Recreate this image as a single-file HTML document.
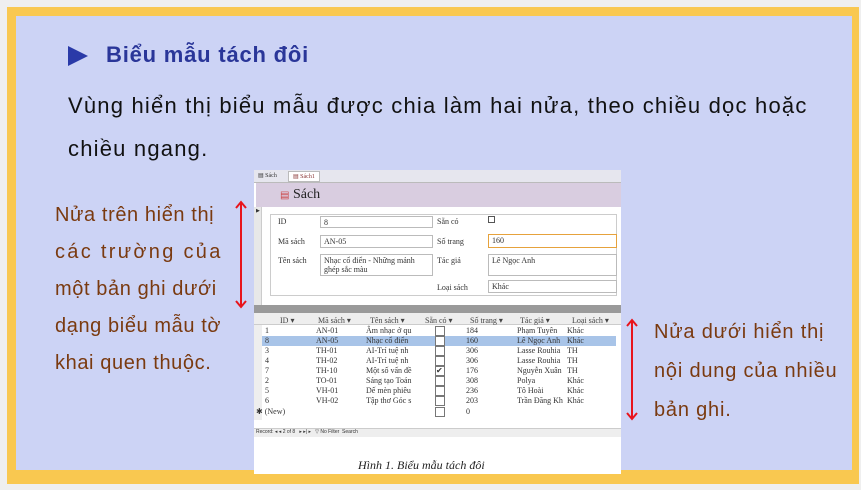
<!DOCTYPE html>
<html><head><meta charset="utf-8"><style>
*{margin:0;padding:0;box-sizing:border-box}
body{width:861px;height:490px;background:#efefef;position:relative;overflow:hidden;font-family:"Liberation Sans",sans-serif}
.frame{position:absolute;left:7px;top:7px;width:852px;height:477px;background:#f9c850}
.inner{position:absolute;left:16px;top:16px;width:836px;height:454px;background:#ccd3f5}
.a{position:absolute;white-space:nowrap}
.title{left:106px;top:42px;font-size:22px;font-weight:bold;color:#2a3699;letter-spacing:0.8px}
.p{left:68px;font-size:22px;color:#111;letter-spacing:1.2px}
.side{color:#7a3a10;font-size:20px}
.img{position:absolute;left:254px;top:170px;width:367px;height:304px;background:#fff;font-family:"Liberation Serif",serif;color:#333}
.s{position:absolute;font-size:8px;white-space:nowrap}
.box{position:absolute;border:1px solid #bbb;background:#fff;font-size:8px;padding:1px 3px}
.row{position:absolute;left:8px;width:354px;height:10px;font-size:8px}
.row span{position:absolute;top:0}
.cb{position:absolute;left:180px;width:10px;height:10px;border:1px solid #777;background:#fff}
</style></head><body>
<div class="frame"></div><div class="inner"></div>
<svg class="a" style="left:68px;top:46px" width="22" height="22"><polygon points="0,0 20,10 0,20" fill="#2a3aa8"/></svg>
<div class="a title">Biểu mẫu tách đôi</div>
<div class="a p" style="top:93px">Vùng hiển thị biểu mẫu được chia làm hai nửa, theo chiều dọc hoặc</div>
<div class="a p" style="top:136px">chiều ngang.</div>
<div class="a side" style="left:55px;top:197px;line-height:37px;letter-spacing:0.6px">Nửa trên hiển thị<br><span style="letter-spacing:2.3px">các trường của</span><br>một bản ghi dưới<br>dạng biểu mẫu tờ<br>khai quen thuộc.</div>
<div class="a side" style="left:654px;top:313px;line-height:39px;letter-spacing:0.8px">Nửa dưới hiển thị<br>nội dung của nhiều<br>bản ghi.</div>
<svg class="a" style="left:234px;top:200px" width="14" height="110"><line x1="7" y1="2" x2="7" y2="107" stroke="#e8141c" stroke-width="2"/><polyline points="2,8 7,2 12,8" fill="none" stroke="#e8141c" stroke-width="2"/><polyline points="2,101 7,107 12,101" fill="none" stroke="#e8141c" stroke-width="2"/></svg>
<svg class="a" style="left:625px;top:318px" width="14" height="104"><line x1="7" y1="2" x2="7" y2="101" stroke="#e8141c" stroke-width="2"/><polyline points="2,8 7,2 12,8" fill="none" stroke="#e8141c" stroke-width="2"/><polyline points="2,95 7,101 12,95" fill="none" stroke="#e8141c" stroke-width="2"/></svg>
<div class="img">
 <div style="position:absolute;left:0;top:0;width:367px;height:13px;background:#e6e6ee;border-bottom:1px solid #bbb"></div>
 <div class="s" style="left:4px;top:2px;font-size:6px">▤ Sách</div>
 <div class="s" style="left:34px;top:1px;font-size:6px;background:#fff;padding:1px 4px;border:1px solid #bbb;color:#833">▤ Sách1</div>
 <div style="position:absolute;left:2px;top:13px;width:365px;height:24px;background:#d9cde0"></div>
 <div class="s" style="left:26px;top:17px;font-size:14px;color:#222"><span style="color:#c44;font-size:10px">▤</span> Sách</div>
 <div style="position:absolute;left:0;top:37px;width:8px;height:98px;background:#e8e8e8;border-right:1px solid #ccc"></div>
 <div class="s" style="left:2px;top:38px;font-size:5px">▶</div>
 <div style="position:absolute;left:16px;top:44px;width:347px;height:82px;border:1px solid #ccc"></div>
 <div class="s" style="left:24px;top:47px">ID</div><div class="box" style="left:66px;top:46px;width:113px;height:12px">8</div>
 <div class="s" style="left:24px;top:67px">Mã sách</div><div class="box" style="left:66px;top:65px;width:113px;height:13px">AN-05</div>
 <div class="s" style="left:24px;top:86px">Tên sách</div><div class="box" style="left:66px;top:84px;width:113px;height:22px;line-height:9px">Nhạc cổ điển - Những mảnh ghép sắc màu</div>
 <div class="s" style="left:183px;top:47px">Sẵn có</div><div style="position:absolute;left:234px;top:46px;width:7px;height:7px;border:1px solid #555"></div>
 <div class="s" style="left:183px;top:67px">Số trang</div><div class="box" style="left:234px;top:64px;width:129px;height:14px;border:1px solid #e6a23c">160</div>
 <div class="s" style="left:183px;top:86px">Tác giả</div><div class="box" style="left:234px;top:84px;width:129px;height:22px">Lê Ngọc Anh</div>
 <div class="s" style="left:183px;top:113px">Loại sách</div><div class="box" style="left:234px;top:110px;width:129px;height:13px">Khác</div>
 <div style="position:absolute;left:0;top:135px;width:367px;height:8px;background:#9a9a9a"></div>
 <div style="position:absolute;left:0;top:143px;width:367px;height:12px;background:#eee;border-bottom:1px solid #ccc"></div>
 <div class="row" style="top:146px;color:#444"><span style="left:18px">ID ▾</span><span style="left:56px">Mã sách ▾</span><span style="left:108px">Tên sách ▾</span><span style="left:163px">Sẵn có ▾</span><span style="left:208px">Số trang ▾</span><span style="left:258px">Tác giả ▾</span><span style="left:310px">Loại sách ▾</span></div>
 <div style="position:absolute;left:0;top:155px;width:8px;height:95px;background:#eee"></div>
 <div class="row" style="top:156px"><span style="left:3px">1</span><span style="left:54px">AN-01</span><span style="left:104px">Âm nhạc ở qu</span><div class="cb" style="left:173px"></div><span style="left:204px">184</span><span style="left:255px">Phạm Tuyên</span><span style="left:305px">Khác</span></div>
 <div class="row" style="top:166px;background:#a8c4e8"><span style="left:3px">8</span><span style="left:54px">AN-05</span><span style="left:104px">Nhạc cổ điển</span><div class="cb" style="left:173px"></div><span style="left:204px">160</span><span style="left:255px">Lê Ngọc Anh</span><span style="left:305px">Khác</span></div>
 <div class="row" style="top:176px"><span style="left:3px">3</span><span style="left:54px">TH-01</span><span style="left:104px">AI-Trí tuệ nh</span><div class="cb" style="left:173px"></div><span style="left:204px">306</span><span style="left:255px">Lasse Rouhia</span><span style="left:305px">TH</span></div>
 <div class="row" style="top:186px"><span style="left:3px">4</span><span style="left:54px">TH-02</span><span style="left:104px">AI-Trí tuệ nh</span><div class="cb" style="left:173px"></div><span style="left:204px">306</span><span style="left:255px">Lasse Rouhia</span><span style="left:305px">TH</span></div>
 <div class="row" style="top:196px"><span style="left:3px">7</span><span style="left:54px">TH-10</span><span style="left:104px">Một số vấn đề</span><div class="cb" style="left:173px;font-size:8px;line-height:8px">✔</div><span style="left:204px">176</span><span style="left:255px">Nguyễn Xuân</span><span style="left:305px">TH</span></div>
 <div class="row" style="top:206px"><span style="left:3px">2</span><span style="left:54px">TO-01</span><span style="left:104px">Sáng tạo Toán</span><div class="cb" style="left:173px"></div><span style="left:204px">308</span><span style="left:255px">Polya</span><span style="left:305px">Khác</span></div>
 <div class="row" style="top:216px"><span style="left:3px">5</span><span style="left:54px">VH-01</span><span style="left:104px">Dế mèn phiêu</span><div class="cb" style="left:173px"></div><span style="left:204px">236</span><span style="left:255px">Tô Hoài</span><span style="left:305px">Khác</span></div>
 <div class="row" style="top:226px"><span style="left:3px">6</span><span style="left:54px">VH-02</span><span style="left:104px">Tập thơ Góc s</span><div class="cb" style="left:173px"></div><span style="left:204px">203</span><span style="left:255px">Trần Đăng Kh</span><span style="left:305px">Khác</span></div>
 <div class="row" style="top:237px"><span style="left:-6px">✱ (New)</span><div class="cb" style="left:173px"></div><span style="left:204px">0</span></div>
 <div style="position:absolute;left:0;top:258px;width:367px;height:9px;background:#eee;border-top:1px solid #ccc"></div>
 <div class="s" style="left:2px;top:259px;font-size:5px;font-family:'Liberation Sans'">Record: ◂ ◂ 2 of 8 &nbsp; ▸ ▸| ▸ &nbsp; ▽ No Filter &nbsp;Search</div>
 <div style="position:absolute;left:0;top:267px;width:367px;height:37px;background:#fff"></div>
 <div class="s" style="left:104px;top:288px;font-size:12px;font-style:italic;color:#222">Hình 1. Biểu mẫu tách đôi</div>
</div>
</body></html>
